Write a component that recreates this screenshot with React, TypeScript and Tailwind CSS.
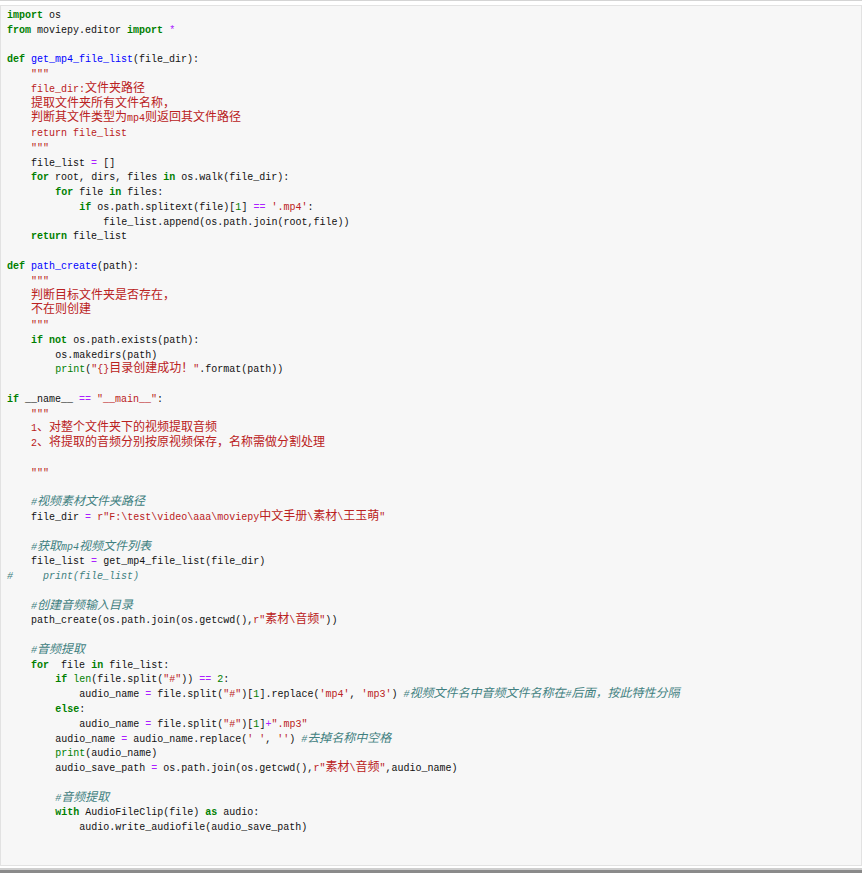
import React from "react";

const CODE = String.raw`import os
from moviepy.editor import *

def get_mp4_file_list(file_dir):
    """
    file_dir:文件夹路径
    提取文件夹所有文件名称，
    判断其文件类型为mp4则返回其文件路径
    return file_list
    """
    file_list = []
    for root, dirs, files in os.walk(file_dir):
        for file in files:
            if os.path.splitext(file)[1] == '.mp4':
                file_list.append(os.path.join(root,file))
    return file_list

def path_create(path):
    """
    判断目标文件夹是否存在，
    不在则创建
    """
    if not os.path.exists(path):
        os.makedirs(path)
        print("{}目录创建成功！".format(path))

if __name__ == "__main__":
    """
    1、对整个文件夹下的视频提取音频
    2、将提取的音频分别按原视频保存，名称需做分割处理

    """

    #视频素材文件夹路径
    file_dir = r"F:\test\video\aaa\moviepy中文手册\素材\王玉萌"

    #获取mp4视频文件列表
    file_list = get_mp4_file_list(file_dir)
#     print(file_list)

    #创建音频输入目录
    path_create(os.path.join(os.getcwd(),r"素材\音频"))

    #音频提取
    for  file in file_list:
        if len(file.split("#")) == 2:
            audio_name = file.split("#")[1].replace('mp4', 'mp3') #视频文件名中音频文件名称在#后面，按此特性分隔
        else:
            audio_name = file.split("#")[1]+".mp3"
        audio_name = audio_name.replace(' ', '') #去掉名称中空格
        print(audio_name)
        audio_save_path = os.path.join(os.getcwd(),r"素材\音频",audio_name)

        #音频提取
        with AudioFileClip(file) as audio:
            audio.write_audiofile(audio_save_path)`;

type Kind = "kw" | "bi" | "fn" | "str" | "com" | "op" | "num" | "txt";
type Tok = { t: string; k: Kind };

const KEYWORDS = new Set(["import", "from", "def", "for", "in", "if", "return", "not", "else", "with", "as"]);
const BUILTINS = new Set(["print", "len"]);

const colors: Record<Kind, string> = {
  kw: "text-[#008000] font-bold",
  bi: "text-[#008000]",
  fn: "text-[#0000ff]",
  str: "text-[#ba2121]",
  com: "text-[#408080] italic",
  op: "text-[#aa22ff]",
  num: "text-[#008000]",
  txt: "text-[#111111]",
};

function tokenize(src: string): Tok[][] {
  let inDoc = false;
  return src.split("\n").map((line) => {
    const toks: Tok[] = [];
    let lastWord = "";
    let i = 0;
    const push = (t: string, k: Kind) => toks.push({ t, k });
    while (i < line.length) {
      if (inDoc) {
        const j = line.indexOf('"""', i);
        if (j >= 0) {
          push(line.slice(i, j + 3), "str");
          i = j + 3;
          inDoc = false;
        } else {
          push(line.slice(i), "str");
          i = line.length;
        }
        continue;
      }
      const c = line[i];
      if (line.startsWith('"""', i)) {
        const j = line.indexOf('"""', i + 3);
        if (j >= 0) {
          push(line.slice(i, j + 3), "str");
          i = j + 3;
        } else {
          push(line.slice(i), "str");
          i = line.length;
          inDoc = true;
        }
        continue;
      }
      if (c === "#") {
        push(line.slice(i), "com");
        break;
      }
      const prev = i > 0 ? line[i - 1] : " ";
      const rawStr = c === "r" && (line[i + 1] === '"' || line[i + 1] === "'") && !/\w/.test(prev);
      if (rawStr || c === '"' || c === "'") {
        const q = rawStr ? line[i + 1] : c;
        const j = line.indexOf(q, rawStr ? i + 2 : i + 1);
        push(line.slice(i, j + 1), "str");
        i = j + 1;
        continue;
      }
      if (/[A-Za-z_]/.test(c)) {
        let j = i;
        while (j < line.length && /\w/.test(line[j])) j++;
        const w = line.slice(i, j);
        let k: Kind = "txt";
        if (KEYWORDS.has(w)) k = "kw";
        else if (BUILTINS.has(w)) k = "bi";
        else if (lastWord === "def") k = "fn";
        push(w, k);
        lastWord = w;
        i = j;
        continue;
      }
      if (/[0-9]/.test(c)) {
        let j = i;
        while (j < line.length && /[0-9]/.test(line[j])) j++;
        push(line.slice(i, j), "num");
        i = j;
        continue;
      }
      if (/[=+*<>!]/.test(c)) {
        let j = i;
        while (j < line.length && /[=+*<>!]/.test(line[j])) j++;
        push(line.slice(i, j), "op");
        i = j;
        continue;
      }
      push(c, "txt");
      i++;
    }
    return toks;
  });
}

const CJK = /([\u3000-\u303f\u4e00-\u9fff\uff00-\uffef]+)/;

// CJK runs are wider (12px) but must not push the line's baseline down
function Text({ text }: { text: string }) {
  const parts = text.split(CJK);
  return (
    <>
      {parts.map((p, i) =>
        i % 2 === 1 ? (
          <span key={i} className="text-[12px] leading-[0] font-['Noto_Sans_CJK_SC',sans-serif]">
            {p}
          </span>
        ) : (
          <React.Fragment key={i}>{p}</React.Fragment>
        )
      )}
    </>
  );
}

const lines = tokenize(CODE);

export default function App() {
  return (
    <div className="h-[873px] bg-white overflow-hidden flex flex-col">
      <div className="border-t border-[#d4d4d4] pt-[4px]">
        <div className="h-[861px] border border-[#e2e2e2] bg-[#f7f7f7] pt-[3px] font-['Liberation_Mono',monospace] text-[10px]">
          {lines.map((toks, li) => (
            <div key={li} className="h-[14.78px] leading-[14.78px] whitespace-pre pl-[6px]">
              {toks.map((tk, ti) => (
                <span key={ti} className={colors[tk.k]}>
                  <Text text={tk.t} />
                </span>
              ))}
            </div>
          ))}
        </div>
      </div>
      <div className="mt-[2px] h-[2px] bg-[#cfcfcf]" />
      <div className="flex-1 bg-[#8a8a8a]" />
    </div>
  );
}
